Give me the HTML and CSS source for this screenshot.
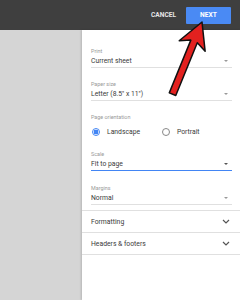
FILE: index.html
```html
<!DOCTYPE html>
<html lang="en">
<head>
  <meta charset="UTF-8" />
  <title>Print settings</title>
  <link rel="stylesheet" href="styles.css">
</head>
<body>
  <header class="topbar">
    <span class="cancel">CANCEL</span>
    <button class="next">NEXT</button>
  </header>

  <main class="content">
    <div class="preview"></div>

    <section class="panel">
      <div class="fields">
        <div class="field">
          <div class="label">Print</div>
          <div class="select"><span>Current sheet</span><i class="caret"></i></div>
        </div>
        <div class="field">
          <div class="label">Paper size</div>
          <div class="select"><span>Letter (8.5" x 11")</span><i class="caret"></i></div>
        </div>
        <div class="field">
          <div class="label">Page orientation</div>
          <div class="radios">
            <label class="radio"><span class="dot on"></span>Landscape</label>
            <label class="radio"><span class="dot"></span>Portrait</label>
          </div>
        </div>
        <div class="field">
          <div class="label">Scale</div>
          <div class="select focused"><span>Fit to page</span><i class="caret dark"></i></div>
        </div>
        <div class="field margins">
          <div class="label">Margins</div>
          <div class="select"><span>Normal</span><i class="caret"></i></div>
        </div>
      </div>

      <div class="section">
        <span>Formatting</span>
        <svg class="chev" width="8" height="5" viewBox="0 0 8 5"><path d="M1 1l3 3 3-3" fill="none" stroke="#555" stroke-width="1.2"/></svg>
      </div>
      <div class="section">
        <span>Headers &amp; footers</span>
        <svg class="chev" width="8" height="5" viewBox="0 0 8 5"><path d="M1 1l3 3 3-3" fill="none" stroke="#555" stroke-width="1.2"/></svg>
      </div>
    </section>
  </main>

  <!-- annotation arrow pointing at NEXT -->
  <svg class="arrow" width="240" height="300" viewBox="0 0 240 300">
    <polygon transform="translate(202 22) rotate(22.2)"
      points="0,0 14,26 3.5,21 3.5,78 -3.5,78 -3.5,21 -14,26"
      fill="#e3211f" stroke="#111" stroke-width="1.5" stroke-linejoin="round"/>
  </svg>
</body>
</html>
```

FILE: styles.css
```css
html, body {
  margin: 0;
  padding: 0;
  width: 240px;
  height: 300px;
  overflow: hidden;
  font-family: Roboto, Arial, sans-serif;
  background-color: #fff;
  position: relative;
}

.topbar {
  height: 30px;
  background-color: #3f3f3f;
  display: flex;
  justify-content: flex-end;
  align-items: center;
  padding-right: 9px;
  box-sizing: border-box;
}

.cancel {
  color: #e6e6e6;
  font-size: 6.6px;
  font-weight: 700;
  margin-right: 10px;
}

.next {
  width: 45px;
  height: 17px;
  border: none;
  border-radius: 1px;
  background-color: #4a8af4;
  color: white;
  font-family: Roboto, Arial, sans-serif;
  font-size: 6.7px;
  font-weight: 700;
  padding: 0;
}

.content {
  display: flex;
  height: 270px;
}

.preview {
  width: 82px;
  background-color: #d5d5d5;
}

.panel {
  flex: 1;
  background-color: #fff;
  box-shadow: -1px 0 2px rgba(0,0,0,0.15);
}

.fields {
  padding: 17px 8px 5px 9px;
}

.field + .field {
  margin-top: 12px;
}

.field.margins {
  margin-top: 13px;
}

.label {
  font-size: 5.4px;
  line-height: 8px;
  color: #999;
}

.select {
  display: flex;
  justify-content: space-between;
  align-items: center;
  font-size: 6.8px;
  line-height: 12px;
  color: #3a3a3a;
  border-bottom: 1px solid #e0e0e0;
}

.select.focused {
  border-bottom-color: #4285f4;
}

.caret {
  width: 0;
  height: 0;
  border-left: 2px solid transparent;
  border-right: 2px solid transparent;
  border-top: 2px solid #999;
  margin-right: 4px;
}

.caret.dark {
  border-top-color: #555;
  border-left-width: 2.5px;
  border-right-width: 2.5px;
  border-top-width: 2.5px;
}

.radios {
  display: flex;
  align-items: center;
  height: 12px;
  margin-top: 5px;
  font-size: 6.8px;
  color: #3a3a3a;
}

.radio {
  display: flex;
  align-items: center;
  width: 70px;
}

.dot {
  width: 6px;
  height: 6px;
  border: 1px solid #888;
  border-radius: 50%;
  margin: 0 7px 0 1px;
  box-sizing: content-box;
}

.dot.on {
  border-color: #4285f4;
  background: radial-gradient(circle, #4285f4 0 2.3px, #fff 2.6px);
}

.section {
  height: 21px;
  border-top: 1px solid #e0e0e0;
  display: flex;
  justify-content: space-between;
  align-items: center;
  padding: 0 10px 0 9px;
  font-size: 6.8px;
  color: #3a3a3a;
}

.section:last-child {
  border-bottom: 1px solid #e0e0e0;
}

.arrow {
  position: absolute;
  top: 0;
  left: 0;
  pointer-events: none;
}
```
